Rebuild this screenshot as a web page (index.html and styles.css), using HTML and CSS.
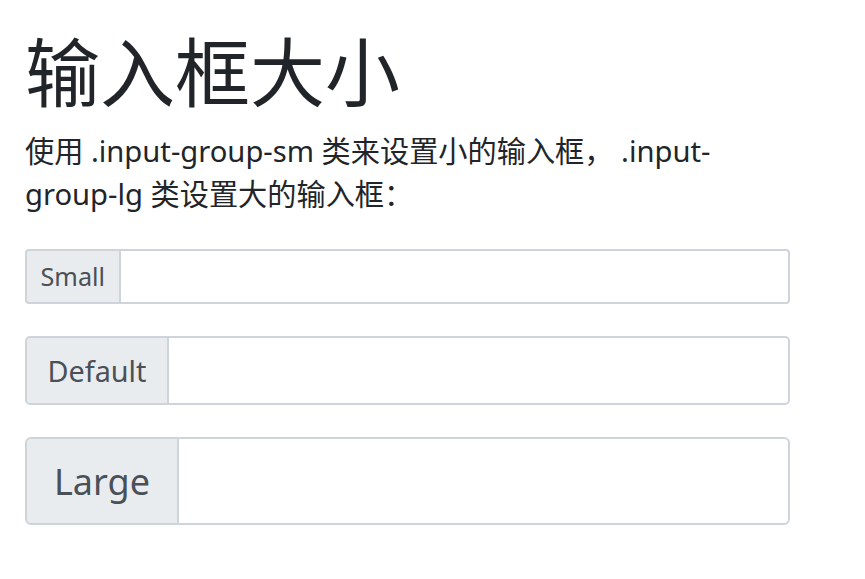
FILE: index.html
```html
<!DOCTYPE html>
<html lang="zh">
<head>
<meta charset="utf-8">
<title>输入框大小</title>
<link rel="stylesheet" href="styles.css">
</head>
<body>
<div class="container">
  <h1 class="title">输入框大小</h1>
  <p class="lead-text">使用 .input-group-sm 类来设置小的输入框， .input-group-lg 类设置大的输入框：</p>
  <div class="input-group input-group-sm">
    <span class="input-group-text">Small</span>
    <input class="form-control" type="text">
  </div>
  <div class="input-group input-group-md">
    <span class="input-group-text">Default</span>
    <input class="form-control" type="text">
  </div>
  <div class="input-group input-group-lg">
    <span class="input-group-text">Large</span>
    <input class="form-control" type="text">
  </div>
</div>
</body>
</html>
```
FILE: styles.css
```css
html, body {
  margin: 0;
  padding: 0;
  background: #fff;
}
body {
  font-family: "Noto Sans", "Noto Sans CJK SC", sans-serif;
  font-size: 28.8px;
  line-height: 1.5;
  color: #212529;
}
.container {
  width: 765px;
  padding: 28.8px 25px 0 25px;
}
.title {
  font-size: 75px;
  font-weight: 400;
  line-height: 86.4px;
  margin: 0 0 14.4px 0;
}
.lead-text {
  font-size: 29.2px;
  line-height: 43.2px;
  margin: 0 0 32.5px 0;
}
.input-group {
  display: flex;
  align-items: stretch;
  width: 100%;
  margin-bottom: 32px;
}
.input-group-text {
  display: flex;
  align-items: center;
  padding-top: 2px;
  background: #e9ecef;
  color: #495057;
  border: 2px solid #ced4da;
}
.form-control {
  flex: 1 1 auto;
  min-width: 0;
  margin: 0;
  background: #fff;
  border: 2px solid #ced4da;
  border-left: none;
  outline: none;
  font: inherit;
}
.input-group-sm { height: 55px; }
.input-group-sm .input-group-text {
  font-size: 25.2px;
  padding-left: 13.5px;
  padding-right: 13.5px;
  border-radius: 4px 0 0 4px;
}
.input-group-sm .form-control { border-radius: 0 4px 4px 0; }
.input-group-md { height: 69px; }
.input-group-md .input-group-text {
  font-size: 28.8px;
  padding-left: 20.5px;
  padding-right: 20.5px;
  border-radius: 5px 0 0 5px;
}
.input-group-md .form-control { border-radius: 0 5px 5px 0; }
.input-group-lg { height: 88px; }
.input-group-lg .input-group-text {
  font-size: 36px;
  padding-left: 27px;
  padding-right: 27px;
  border-radius: 6px 0 0 6px;
}
.input-group-lg .form-control { border-radius: 0 6px 6px 0; }
```
